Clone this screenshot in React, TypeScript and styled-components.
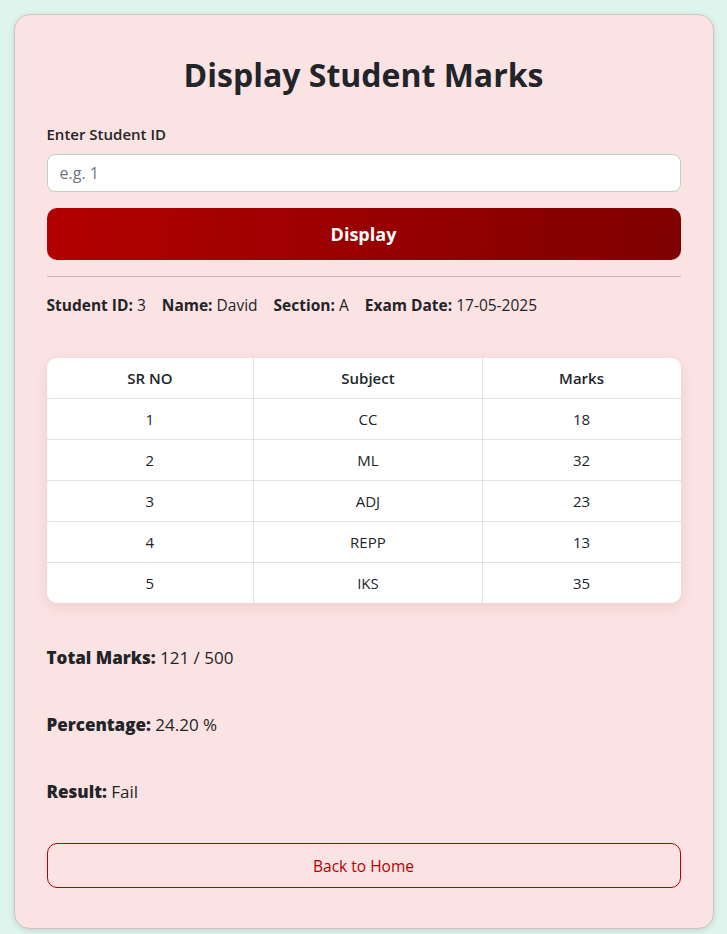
import React from "react";
import styled, { createGlobalStyle } from "styled-components";

const GlobalStyle = createGlobalStyle`
  * { box-sizing: border-box; }
  html, body { margin: 0; padding: 0; }
  body {
    background: #def5ed;
    font-family: "Open Sans", "Noto Sans", Arial, sans-serif;
    font-size: 16px;
    line-height: 1.5;
    color: #212529;
  }
`;

const Page = styled.div`
  padding-top: 14px;
  min-height: 934px;
`;

const Card = styled.div`
  width: 700px;
  margin: 0 auto;
  background: #fce3e3;
  border: 1px solid #d3c3c3;
  border-radius: 16px;
  box-shadow: 0 2px 6px rgba(0, 0, 0, 0.12);
  padding: 41px 32px 40px;
  display: flex;
  flex-direction: column;
`;

const Title = styled.h2`
  margin: 0 0 28px;
  font-size: 32px;
  line-height: 1.2;
  font-weight: 700;
  text-align: center;
  color: #212529;
`;

const Label = styled.label`
  display: block;
  font-size: 15px;
  font-weight: 600;
  line-height: 24px;
  margin-bottom: 8px;
`;

const Input = styled.input`
  display: block;
  width: 100%;
  height: 38px;
  padding: 6px 12px;
  font-family: inherit;
  font-size: 16px;
  color: #212529;
  background: #fff;
  border: 1px solid #b9d5bb;
  border-radius: 8px;
  outline: none;
  &::placeholder { color: #6c757d; }
`;

const PrimaryButton = styled.button`
  margin-top: 16px;
  height: 52px;
  width: 100%;
  border: none;
  border-radius: 10px;
  background: linear-gradient(100deg, #b30000 0%, #990000 50%, #7e0000 100%);
  color: #fff;
  font-family: inherit;
  font-size: 18px;
  font-weight: 700;
  cursor: pointer;
`;

const Divider = styled.hr`
  margin: 16px 0;
  border: 0;
  border-top: 1px solid #cdb4b4;
`;

const InfoLine = styled.div`
  display: flex;
  gap: 16px;
  font-size: 15.5px;
  line-height: 24px;
`;

const InfoItem = styled.span`
  b { font-weight: 700; }
`;

const TableWrap = styled.div`
  margin-top: 41px;
  background: #fff;
  border-radius: 10px;
  overflow: hidden;
  box-shadow: 0 4px 14px rgba(160, 90, 90, 0.16);
`;

const Table = styled.table`
  width: 100%;
  border-collapse: collapse;
  font-size: 15px;
`;

const Th = styled.th<{ $w: string }>`
  width: ${(p) => p.$w};
  font-weight: 600;
  text-align: center;
  padding: 8px;
  line-height: 24px;
  border-bottom: 1px solid #e2e2e2;
  & + & { border-left: 1px solid #e2e2e2; }
`;

const Td = styled.td`
  text-align: center;
  padding: 8px;
  line-height: 24px;
  border-top: 1px solid #e2e2e2;
  & + & { border-left: 1px solid #e2e2e2; }
`;

const Row = styled.tr`
  &:first-child td { border-top: none; }
`;

const Summary = styled.div`
  margin-top: 41px;
  display: flex;
  flex-direction: column;
  gap: 40px;
`;

const SummaryLine = styled.div`
  font-size: 17px;
  line-height: 27px;
  b { font-weight: 800; }
`;

const OutlineButton = styled.button`
  margin-top: 38px;
  width: 100%;
  height: 45px;
  background: transparent;
  border: 1px solid #b30000;
  border-radius: 10px;
  color: #b30000;
  font-family: inherit;
  font-size: 15.5px;
  font-weight: 500;
  cursor: pointer;
`;

const marks = [
  { sr: 1, subject: "CC", marks: 18 },
  { sr: 2, subject: "ML", marks: 32 },
  { sr: 3, subject: "ADJ", marks: 23 },
  { sr: 4, subject: "REPP", marks: 13 },
  { sr: 5, subject: "IKS", marks: 35 },
];

export default function App() {
  return (
    <Page>
      <GlobalStyle />
      <Card>
        <Title>Display Student Marks</Title>
        <Label htmlFor="sid">Enter Student ID</Label>
        <Input id="sid" placeholder="e.g. 1" />
        <PrimaryButton>Display</PrimaryButton>
        <Divider />
        <InfoLine>
          <InfoItem><b>Student ID:</b> 3</InfoItem>
          <InfoItem><b>Name:</b> David</InfoItem>
          <InfoItem><b>Section:</b> A</InfoItem>
          <InfoItem><b>Exam Date:</b> 17-05-2025</InfoItem>
        </InfoLine>
        <TableWrap>
          <Table>
            <thead>
              <tr>
                <Th $w="32.7%">SR NO</Th>
                <Th $w="36%">Subject</Th>
                <Th $w="31.3%">Marks</Th>
              </tr>
            </thead>
            <tbody>
              {marks.map((m) => (
                <Row key={m.sr}>
                  <Td>{m.sr}</Td>
                  <Td>{m.subject}</Td>
                  <Td>{m.marks}</Td>
                </Row>
              ))}
            </tbody>
          </Table>
        </TableWrap>
        <Summary>
          <SummaryLine><b>Total Marks:</b> 121 / 500</SummaryLine>
          <SummaryLine><b>Percentage:</b> 24.20 %</SummaryLine>
          <SummaryLine><b>Result:</b> Fail</SummaryLine>
        </Summary>
        <OutlineButton>Back to Home</OutlineButton>
      </Card>
    </Page>
  );
}
